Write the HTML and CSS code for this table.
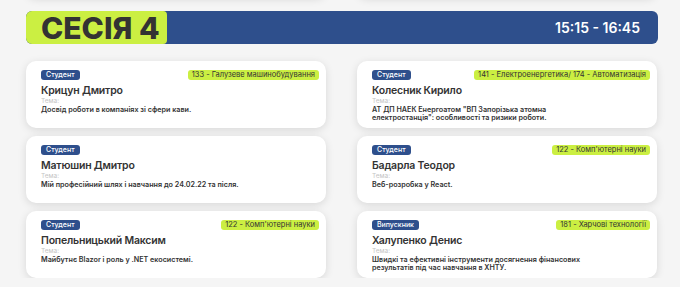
FILE: index.html
```html
<!DOCTYPE html>
<html lang="uk">
<head>
<meta charset="utf-8">
<link rel="stylesheet" href="styles.css">
</head>
<body>
<div class="page">
  <div class="prev-row">
    <div class="prev-card"></div>
    <div class="prev-card"></div>
  </div>
  <div class="session">
    <div class="session-title">СЕСІЯ 4</div>
    <div class="session-time">15:15 - 16:45</div>
  </div>
  <div class="grid">
    <div class="card">
      <div class="card-top"><span class="badge">Студент</span><span class="tag">133 - Галузеве машинобудування</span></div>
      <div class="name">Крицун Дмитро</div>
      <div class="label">Тема:</div>
      <div class="topic">Досвід роботи в компаніях зі сфери кави.</div>
    </div>
    <div class="card">
      <div class="card-top"><span class="badge">Студент</span><span class="tag">141 - Електроенергетика/ 174 - Автоматизація</span></div>
      <div class="name">Колесник Кирило</div>
      <div class="label">Тема:</div>
      <div class="topic">АТ ДП НАЕК Енергоатом "ВП Запорізька атомна електростанція": особливості та ризики роботи.</div>
    </div>
    <div class="card">
      <div class="card-top"><span class="badge">Студент</span></div>
      <div class="name">Матюшин Дмитро</div>
      <div class="label">Тема:</div>
      <div class="topic">Мій професійний шлях і навчання до 24.02.22 та після.</div>
    </div>
    <div class="card">
      <div class="card-top"><span class="badge">Студент</span><span class="tag">122 - Комп'ютерні науки</span></div>
      <div class="name">Бадарла Теодор</div>
      <div class="label">Тема:</div>
      <div class="topic">Веб-розробка у React.</div>
    </div>
    <div class="card">
      <div class="card-top"><span class="badge">Студент</span><span class="tag">122 - Комп'ютерні науки</span></div>
      <div class="name">Попельницький Максим</div>
      <div class="label">Тема:</div>
      <div class="topic">Майбутнє Blazor і роль у .NET екосистемі.</div>
    </div>
    <div class="card">
      <div class="card-top"><span class="badge">Випускник</span><span class="tag">181 - Харчові технології</span></div>
      <div class="name">Халупенко Денис</div>
      <div class="label">Тема:</div>
      <div class="topic">Швидкі та ефективні інструменти досягнення фінансових результатів під час навчання в ХНТУ.</div>
    </div>
  </div>
</div>
</body>
</html>
```

FILE: styles.css
```css
html, body {
  margin: 0;
  padding: 0;
  background: #f5f5f5;
  font-family: Inter, "Noto Sans", sans-serif;
  color: #333;
  overflow: hidden;
}
.page {
  width: 632px;
  margin-left: 26px;
}
.prev-row {
  display: grid;
  grid-template-columns: 300px 300px;
  column-gap: 31px;
  height: 40px;
  margin-top: -43px;
}
.prev-card {
  background: #fff;
  border-radius: 10px;
  box-shadow: 0 2px 8px rgba(0,0,0,0.13);
}
.session {
  margin-top: 14px;
  height: 33px;
  background: #2e4f8c;
  border-radius: 6px;
  display: flex;
  align-items: center;
  justify-content: space-between;
}
.session-title {
  height: 33px;
  width: 141px;
  box-sizing: border-box;
  padding-left: 15px;
  background: #cbef42;
  border-radius: 6px 4px 4px 6px;
  font-weight: 800;
  font-size: 30px;
  line-height: 34px;
  color: #333;
}
.session-time {
  color: #fff;
  font-weight: 600;
  font-size: 14px;
  padding-right: 18px;
}
.grid {
  margin-top: 17px;
  display: grid;
  grid-template-columns: 300px 300px;
  column-gap: 31px;
  row-gap: 8px;
}
.card {
  height: 67px;
  box-sizing: border-box;
  background: #fff;
  border-radius: 10px;
  box-shadow: 0 2px 8px rgba(0,0,0,0.12);
  padding: 9px 7px 0 15px;
}
.card-top {
  display: flex;
  justify-content: space-between;
  align-items: center;
  height: 10px;
}
.badge {
  background: #2e4f8c;
  color: #fff;
  font-size: 7px;
  font-weight: 500;
  line-height: 10px;
  padding: 0 5px;
  border-radius: 3px;
}
.tag {
  background: #cbef42;
  color: #333;
  font-size: 7.5px;
  line-height: 10px;
  padding: 0 4px;
  border-radius: 3px;
}
.name {
  margin-top: 4px;
  font-size: 10.5px;
  font-weight: 600;
  line-height: 13px;
  letter-spacing: -0.2px;
  color: #333;
}
.label {
  font-size: 6.5px;
  line-height: 9px;
  color: #c4c4c4;
}
.topic {
  font-size: 7.2px;
  font-weight: 600;
  line-height: 8px;
  color: #333;
  max-width: 222px;
}
```
